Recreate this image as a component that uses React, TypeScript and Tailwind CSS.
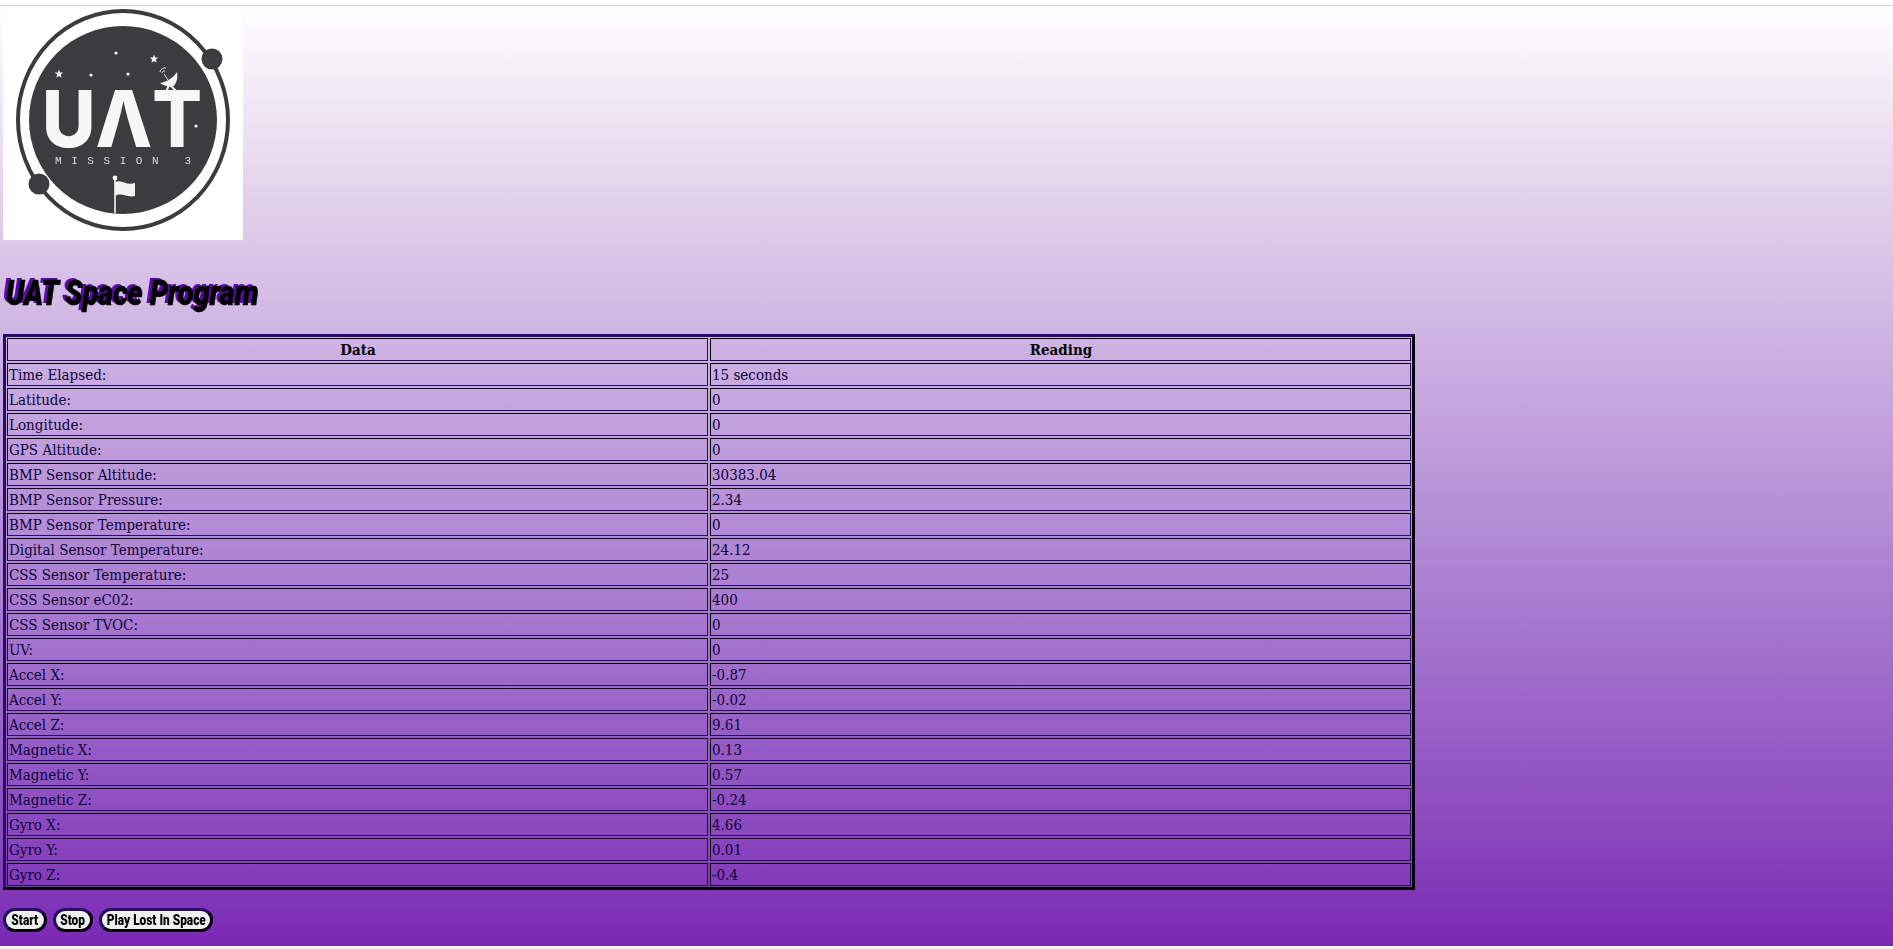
const rows: [string, string][] = [
  ["Time Elapsed:", "15 seconds"],
  ["Latitude:", "0"],
  ["Longitude:", "0"],
  ["GPS Altitude:", "0"],
  ["BMP Sensor Altitude:", "30383.04"],
  ["BMP Sensor Pressure:", "2.34"],
  ["BMP Sensor Temperature:", "0"],
  ["Digital Sensor Temperature:", "24.12"],
  ["CSS Sensor Temperature:", "25"],
  ["CSS Sensor eC02:", "400"],
  ["CSS Sensor TVOC:", "0"],
  ["UV:", "0"],
  ["Accel X:", "-0.87"],
  ["Accel Y:", "-0.02"],
  ["Accel Z:", "9.61"],
  ["Magnetic X:", "0.13"],
  ["Magnetic Y:", "0.57"],
  ["Magnetic Z:", "-0.24"],
  ["Gyro X:", "4.66"],
  ["Gyro Y:", "0.01"],
  ["Gyro Z:", "-0.4"],
];

const cell =
  "h-[23px] p-0 pt-px pl-px border border-t-black border-l-black border-r-[#2a0a6a] border-b-[#2a0a6a] text-left font-normal align-middle leading-[20px]";

function Star({ x, y, r }: { x: number; y: number; r: number }) {
  const pts = [0, 1, 2, 3, 4, 5, 6, 7, 8, 9]
    .map((i) => {
      const a = (i * Math.PI) / 5 - Math.PI / 2;
      const d = i % 2 === 0 ? r : r * 0.42;
      return `${x + d * Math.cos(a)},${y + d * Math.sin(a)}`;
    })
    .join(" ");
  return <polygon points={pts} fill="#f4f4f4" />;
}

function Logo() {
  return (
    <div className="ml-[3px] w-[240px] h-[233px] bg-white">
      <svg width="240" height="233" viewBox="3 7 240 233" className="block blur-[0.3px]">
        <ellipse cx="123" cy="120" rx="105" ry="109" fill="none" stroke="#3c3c3e" strokeWidth="4" />
        <circle cx="123" cy="120" r="94" fill="#3c3c3e" />
        <circle cx="212" cy="59" r="10.5" fill="#3c3c3e" />
        <circle cx="39" cy="184" r="10.5" fill="#3c3c3e" />
        <Star x={59} y={74} r={4.5} />
        <Star x={154} y={59} r={4.5} />
        <circle cx="91" cy="75" r="1.6" fill="#f4f4f4" />
        <circle cx="116" cy="53" r="1.6" fill="#f4f4f4" />
        <circle cx="128" cy="74" r="1.6" fill="#f4f4f4" />
        <circle cx="196" cy="126" r="1.6" fill="#f4f4f4" />
        <text
          x="42"
          y="147"
          textLength="160"
          lengthAdjust="spacingAndGlyphs"
          fontFamily="Inter, sans-serif"
          fontWeight="800"
          fontSize="79"
          fill="#f7f7f7"
        >
          UΛT
        </text>
        <text
          x="55"
          y="164"
          textLength="136"
          fontFamily="'Liberation Mono', monospace"
          fontSize="11"
          fill="#dcdcdc"
        >
          MISSION 3
        </text>
        <path d="M160 83 C167 82 174 77 177 72 C178 77 177 82 174 86 C169 87 164 86 160 83Z" fill="#f4f4f4" />
        <path d="M169 85 L166 92 M170 85 L177 92" stroke="#f4f4f4" strokeWidth="2" />
        <path d="M160 72 A5 5 0 0 1 166 68 M162 73 A2.5 2.5 0 0 1 165 71 M164 74 L168 80" stroke="#dcdcdc" strokeWidth="1" fill="none" />
        <path d="M115 178 V213" stroke="#f4f4f4" strokeWidth="1.6" />
        <circle cx="115" cy="178" r="2.4" fill="#f4f4f4" />
        <path d="M115 182 C122 179 126 186 135 183 V196 C127 198 122 192 115 196Z" fill="#f4f4f4" />
      </svg>
    </div>
  );
}

function Btn({ label, className }: { label: string; className: string }) {
  return (
    <button
      className={`${className} h-[24px] flex items-center justify-center rounded-full border-[3px] border-t-[#2a0a6a] border-l-[#2a0a6a] border-r-black border-b-black bg-[#efefef] text-black font-['Roboto',sans-serif] font-black text-[14px] leading-none whitespace-nowrap`}
    >
      <span className="inline-block scale-x-[0.85]">{label}</span>
    </button>
  );
}

export default function App() {
  return (
    <div className="h-[949px] overflow-hidden flex flex-col bg-[#f2f2f2]">
      <div className="h-[6px] shrink-0 bg-white border-b border-[#d4d4d4]" />
      <div className="h-[940px] shrink-0 pt-px bg-gradient-to-b from-white via-[#e3d2ec] via-20% to-[#7b27b4]">
        <Logo />
        <h1 className="ml-[6px] mt-[35px] h-[38px] text-[35px] leading-[38px] italic font-black text-black font-['Roboto',sans-serif] origin-left scale-x-[0.82] whitespace-nowrap [-webkit-text-stroke:0.6px_black] [text-shadow:-4px_-2px_0_#5b0aa8]">
          UAT Space Program
        </h1>
        <div className="ml-[3px] mt-[21px] w-[1412px] border-[3px] border-t-[#2a0a6a] border-l-[#2a0a6a] border-r-black border-b-black">
          <table className="-m-px w-[1408px] table-fixed border-separate border-spacing-[2px] text-[15px] text-[#0e0438] font-['DejaVu_Serif_Condensed','DejaVu_Serif',serif]">
            <thead>
              <tr>
                <th className={`${cell} !text-center !font-bold text-black w-[701px]`}>Data</th>
                <th className={`${cell} !text-center !font-bold text-black`}>Reading</th>
              </tr>
            </thead>
            <tbody>
              {rows.map(([name, value]) => (
                <tr key={name}>
                  <td className={cell}>{name}</td>
                  <td className={cell}>{value}</td>
                </tr>
              ))}
            </tbody>
          </table>
        </div>
        <div className="ml-[3px] mt-[18px] flex gap-[6px]">
          <Btn label="Start" className="w-[44px]" />
          <Btn label="Stop" className="w-[40px]" />
          <Btn label="Play Lost In Space" className="w-[114px]" />
        </div>
      </div>
    </div>
  );
}
